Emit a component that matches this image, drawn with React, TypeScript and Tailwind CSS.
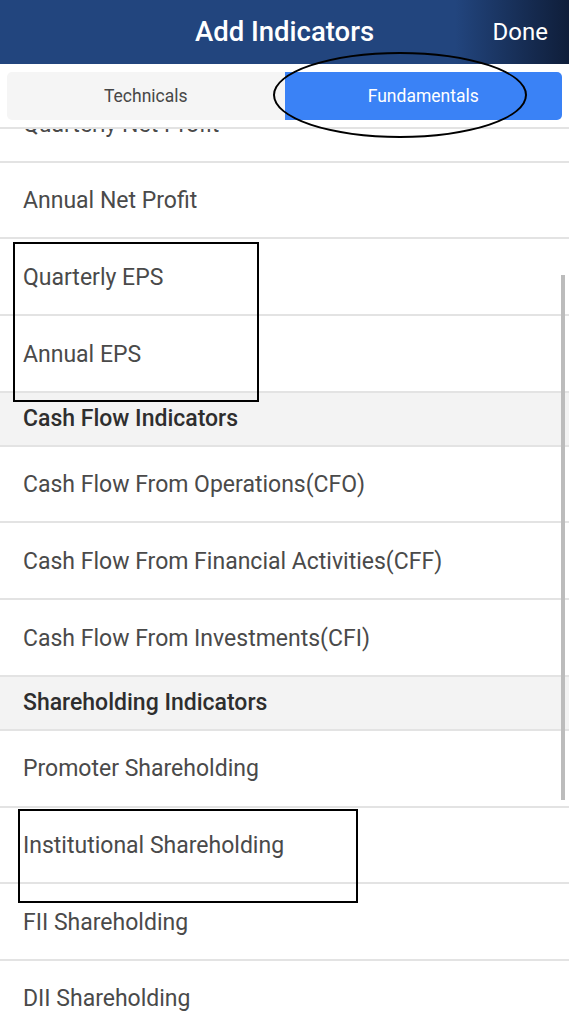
type Row = { label: string; section?: boolean };

const rows: Row[] = [
  { label: 'Quarterly Net Profit' },
  { label: 'Annual Net Profit' },
  { label: 'Quarterly EPS' },
  { label: 'Annual EPS' },
  { label: 'Cash Flow Indicators', section: true },
  { label: 'Cash Flow From Operations(CFO)' },
  { label: 'Cash Flow From Financial Activities(CFF)' },
  { label: 'Cash Flow From Investments(CFI)' },
  { label: 'Shareholding Indicators', section: true },
  { label: 'Promoter Shareholding' },
  { label: 'Institutional Shareholding' },
  { label: 'FII Shareholding' },
  { label: 'DII Shareholding' },
  { label: 'MF Shareholding' },
];

function ListRow({ row }: { row: Row }) {
  if (row.section) {
    return (
      <div className="h-[54px] flex items-center px-[23px] pt-px bg-[#f3f3f3] border-b-2 border-[#e3e3e3] text-[23px] font-medium text-[#2e2e2e]">
        {row.label}
      </div>
    );
  }
  return (
    <div className="h-[76.7px] flex items-center px-[23px] pt-[3px] border-b-2 border-[#e3e3e3] text-[23px] text-[#4a4a4a]">
      {row.label}
    </div>
  );
}

export default function App() {
  return (
    <div className="relative w-full h-[1024px] overflow-hidden bg-white font-['Roboto','Liberation_Sans',sans-serif]">
      <header className="h-16 flex items-center bg-gradient-to-r from-[#22457e] via-[#22457e] via-80% to-[#0f1e3a] text-white">
        <div className="w-[90px]" />
        <h1 className="flex-1 text-center text-[27.5px] font-medium">Add Indicators</h1>
        <button className="w-[90px] text-right pr-[21px] text-[24px]">Done</button>
      </header>

      <div className="relative z-10 bg-white px-[7px] pt-2 pb-[7px] border-b-2 border-[#e3e3e3]">
        <div className="flex h-12 text-[17.5px]">
          <button className="flex-1 rounded-l-[5px] bg-[#f5f5f5] text-[#474747]">Technicals</button>
          <button className="flex-1 rounded-r-[5px] bg-[#3a82f6] text-white">Fundamentals</button>
        </div>
      </div>

      <div className="relative overflow-hidden">
        <div className="-mt-[43px]">
          {rows.map((row) => (
            <ListRow key={row.label} row={row} />
          ))}
        </div>
      </div>

      {/* scrollbar */}
      <div className="absolute left-[561px] top-[275px] w-[4px] h-[525px] bg-[#bcbcbc]" />

      {/* annotations */}
      <div className="absolute left-[273px] top-[52px] w-[254px] h-[86px] rounded-[50%] border-2 border-black z-20" />
      <div className="absolute left-[13px] top-[242px] w-[246px] h-[160px] border-2 border-black z-20" />
      <div className="absolute left-[18px] top-[809px] w-[340px] h-[94px] border-2 border-black z-20" />
    </div>
  );
}
